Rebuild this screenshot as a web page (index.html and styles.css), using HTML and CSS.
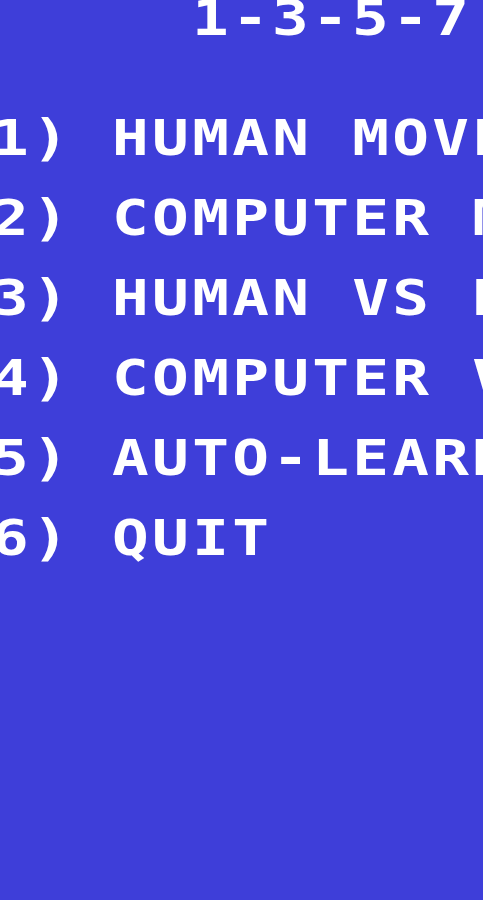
FILE: index.html
```html
<!DOCTYPE html>
<html lang="en">
<head>
<meta charset="utf-8">
<title>1-3-5-7</title>
<link rel="stylesheet" href="styles.css">
</head>
<body>
<main class="screen">
  <h1 class="title">1-3-5-7 GAME</h1>
  <ul class="menu">
    <li class="item">1) HUMAN MOVES FIRST</li>
    <li class="item">2) COMPUTER MOVES FIRST</li>
    <li class="item">3) HUMAN VS HUMAN</li>
    <li class="item">4) COMPUTER VS COMPUTER</li>
    <li class="item">5) AUTO-LEARN MODE</li>
    <li class="item">6) QUIT</li>
  </ul>
</main>
</body>
</html>
```

FILE: styles.css
```css
html, body {
  margin: 0;
  padding: 0;
  background: #3e3ed9;
  overflow: hidden;
  height: 100%;
}

.screen {
  margin-left: -8px;
  color: #ffffff;
  font-family: "DejaVu Sans Mono", "Liberation Mono", monospace;
  font-weight: bold;
  font-size: 61px;
  letter-spacing: 3.3px;
  white-space: nowrap;
}

.title {
  margin: -2px 0 0 0;
  padding-left: 200px;
  font-size: inherit;
  font-weight: inherit;
  line-height: 40px;
  transform: scaleY(0.83);
  transform-origin: 50% 50%;
}

.menu {
  list-style: none;
  margin: 60px 0 0 0;
  padding: 0;
}

.item {
  line-height: 80px;
  transform: scaleY(0.83);
  transform-origin: 50% 50%;
}
```
